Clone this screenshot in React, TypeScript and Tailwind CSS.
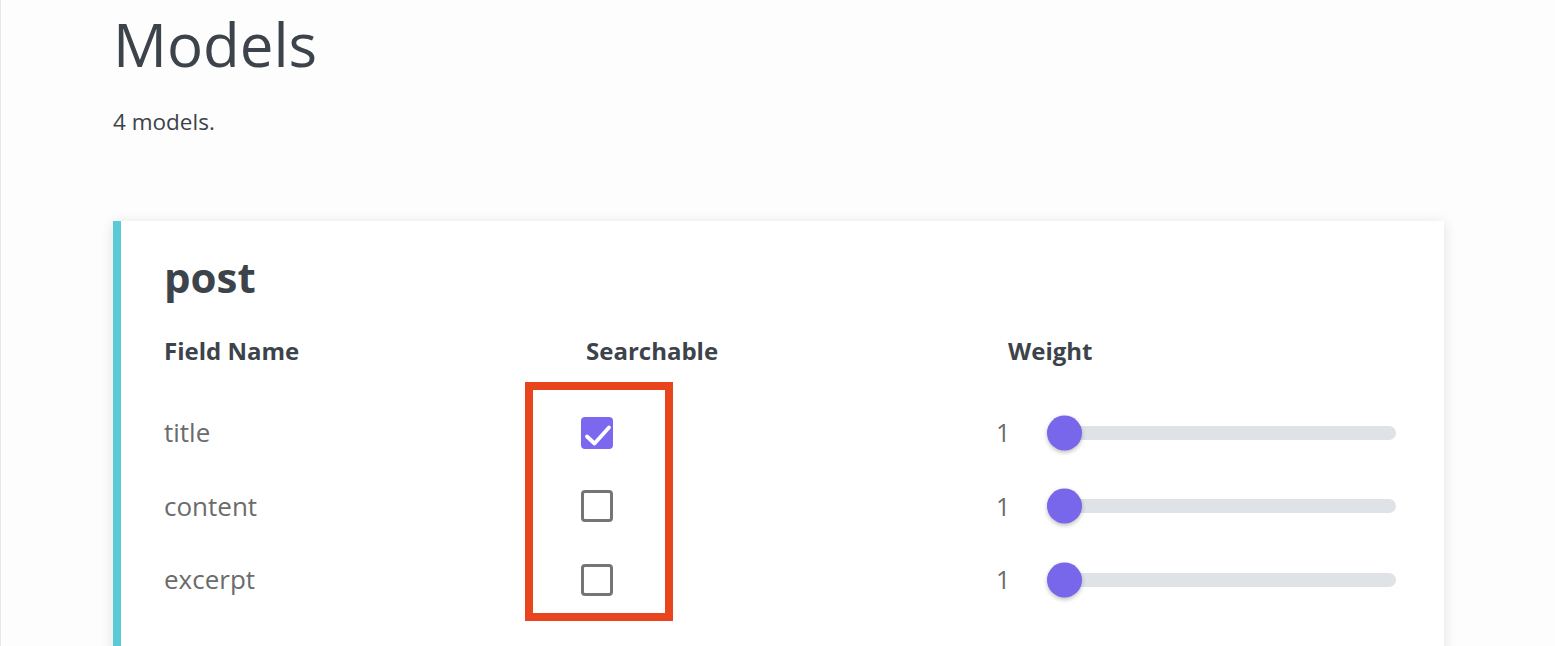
const fields = [
  { name: 'title', searchable: true, weight: 1 },
  { name: 'content', searchable: false, weight: 1 },
  { name: 'excerpt', searchable: false, weight: 1 },
];

function Checkbox({ checked }: { checked: boolean }) {
  if (checked) {
    return (
      <span className="block h-[32px] w-[32px] rounded-[4px] bg-[#7b68ee]">
        <svg viewBox="0 0 32 32" className="h-[32px] w-[32px]" fill="none">
          <path d="M6 19.5 13.5 26.5 28 10.5" stroke="white" strokeWidth="3.8" strokeLinecap="round" strokeLinejoin="round" />
        </svg>
      </span>
    );
  }
  return <span className="block h-[32px] w-[32px] rounded-[4px] border-[3px] border-[#757575] bg-white" />;
}

function Slider({ value }: { value: number }) {
  return (
    <div className="flex items-center">
      <span className="-ml-[2px] w-[51px] text-[25px] text-[#6b6b6b]">{value}</span>
      <div className="relative h-[14px] w-[349px] rounded-full bg-[#dfe2e7]">
        <span className="absolute left-0 top-1/2 h-[35px] w-[35px] -translate-y-1/2 rounded-full bg-[#7867ea] shadow-[0_2px_4px_rgba(0,0,0,0.25)]" />
      </div>
    </div>
  );
}

export default function App() {
  return (
    <div
      className="relative min-h-[646px] overflow-hidden border-l border-[#e8e8e8] bg-[#fdfdfd] pl-[112px] text-[#3c434a]"
      style={{ fontFamily: '"Open Sans", "Noto Sans", sans-serif' }}
    >
      <h1 className="pt-[8px] text-[60px] leading-[72px] font-normal">Models</h1>
      <p className="mt-[24.5px] text-[22.5px] leading-[33px]">4 models.</p>

      <section className="mt-[83.5px] w-[1331px] border-l-[8px] border-[#5bc9d6] bg-white pb-[60px] pl-[43px] shadow-[0_2px_12px_rgba(0,0,0,0.12)]">
        <h2 className="pt-[28px] text-[42px] leading-[56px] font-bold">post</h2>

        <div className="mt-[29px] grid grid-cols-[417px_417px_1fr] text-[24px] leading-[34px] font-bold">
          <div>Field Name</div>
          <div className="pl-[5px]">Searchable</div>
          <div className="pl-[10px]">Weight</div>
        </div>

        <div className="mt-[28px] flex flex-col">
          {fields.map((f) => (
            <div key={f.name} className="grid h-[73.5px] grid-cols-[417px_417px_1fr] items-center">
              <span className="text-[26px] text-[#6b6b6b]">{f.name}</span>
              <Checkbox checked={f.searchable} />
              <Slider value={f.weight} />
            </div>
          ))}
        </div>
      </section>

      {/* highlight box */}
      <div className="pointer-events-none absolute left-[524px] top-[382px] h-[239px] w-[148px] border-[8px] border-[#e8451f]" />
    </div>
  );
}
